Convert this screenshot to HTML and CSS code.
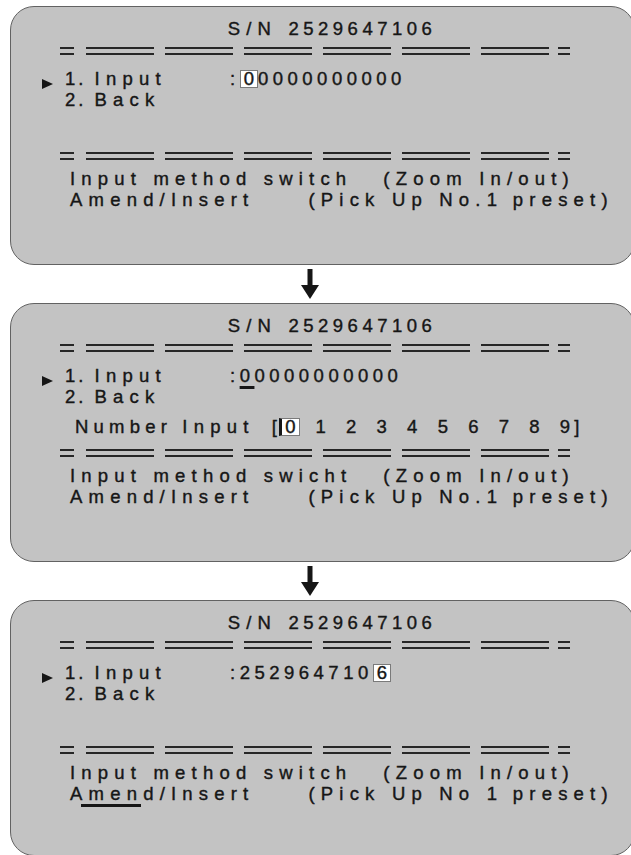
FILE: index.html
```html
<!DOCTYPE html>
<html lang="en">
<head>
    <meta charset="UTF-8">
    <meta name="viewport" content="width=device-width, initial-scale=1.0">
    <title>S/N input</title>
    <link rel="stylesheet" href="styles.css">
</head>
<body>
    <div class="flow">
        <!-- step 1: cursor box on first digit -->
        <section class="osd">
            <h2 class="title">S/N <span class="num">2529647106</span></h2>
            <div class="sep">
                <i class="bar short"></i><i class="bar"></i><i class="bar"></i><i class="bar"></i><i class="bar"></i><i class="bar"></i><i class="bar"></i><i class="bar short"></i>
            </div>
            <div class="menu">
                <svg class="marker" width="11" height="10" viewBox="0 0 11 10"><polygon points="0,0 11,5 0,10" fill="#161616"/></svg>
                <span class="label"><span class="idx">1. </span>Input</span>
                <span class="value num">:<span class="cur">0</span>0000000000</span>
            </div>
            <div class="menu">
                <span></span>
                <span class="label"><span class="idx">2. </span>Back</span>
                <span></span>
            </div>
            <div class="extra"></div>
            <div class="sep">
                <i class="bar short"></i><i class="bar"></i><i class="bar"></i><i class="bar"></i><i class="bar"></i><i class="bar"></i><i class="bar"></i><i class="bar short"></i>
            </div>
            <p class="help"><span class="key">Input method switch</span><span class="hint zoom">(Zoom In/out)</span></p>
            <p class="help"><span class="key">Amend/Insert</span><span class="hint pick">(Pick Up No.<span class="num">1</span> preset)</span></p>
        </section>

        <div class="arrow">
            <svg width="18" height="30" viewBox="0 0 18 30"><rect x="6.5" y="0" width="5" height="17" fill="#161616"/><polygon points="0,16 18,16 9,30" fill="#161616"/></svg>
        </div>

        <!-- step 2: number input list -->
        <section class="osd">
            <h2 class="title">S/N <span class="num">2529647106</span></h2>
            <div class="sep">
                <i class="bar short"></i><i class="bar"></i><i class="bar"></i><i class="bar"></i><i class="bar"></i><i class="bar"></i><i class="bar"></i><i class="bar short"></i>
            </div>
            <div class="menu">
                <svg class="marker" width="11" height="10" viewBox="0 0 11 10"><polygon points="0,0 11,5 0,10" fill="#161616"/></svg>
                <span class="label"><span class="idx">1. </span>Input</span>
                <span class="value num">:<span class="under">0</span>0000000000</span>
            </div>
            <div class="menu">
                <span></span>
                <span class="label"><span class="idx">2. </span>Back</span>
                <span></span>
            </div>
            <div class="extra">
                <p class="pick-list"><span class="word">Number </span>Input <span class="digits">[<span class="cur">0</span> 1 2 3 4 5 6 7 8 9]</span></p>
            </div>
            <div class="sep">
                <i class="bar short"></i><i class="bar"></i><i class="bar"></i><i class="bar"></i><i class="bar"></i><i class="bar"></i><i class="bar"></i><i class="bar short"></i>
            </div>
            <p class="help"><span class="key">Input method swicht</span><span class="hint zoom">(Zoom In/out)</span></p>
            <p class="help"><span class="key">Amend/Insert</span><span class="hint pick">(Pick Up No.<span class="num">1</span> preset)</span></p>
        </section>

        <div class="arrow">
            <svg width="18" height="30" viewBox="0 0 18 30"><rect x="6.5" y="0" width="5" height="17" fill="#161616"/><polygon points="0,16 18,16 9,30" fill="#161616"/></svg>
        </div>

        <!-- step 3: serial entered -->
        <section class="osd last">
            <h2 class="title">S/N <span class="num">2529647106</span></h2>
            <div class="sep">
                <i class="bar short"></i><i class="bar"></i><i class="bar"></i><i class="bar"></i><i class="bar"></i><i class="bar"></i><i class="bar"></i><i class="bar short"></i>
            </div>
            <div class="menu">
                <svg class="marker" width="11" height="10" viewBox="0 0 11 10"><polygon points="0,0 11,5 0,10" fill="#161616"/></svg>
                <span class="label"><span class="idx">1. </span>Input</span>
                <span class="value num">:252964710<span class="cur">6</span></span>
            </div>
            <div class="menu">
                <span></span>
                <span class="label"><span class="idx">2. </span>Back</span>
                <span></span>
            </div>
            <div class="extra"></div>
            <div class="sep">
                <i class="bar short"></i><i class="bar"></i><i class="bar"></i><i class="bar"></i><i class="bar"></i><i class="bar"></i><i class="bar"></i><i class="bar short"></i>
            </div>
            <p class="help"><span class="key">Input method switch</span><span class="hint zoom">(Zoom In/out)</span></p>
            <p class="help"><span class="key"><span class="mode">Amend</span>/Insert</span><span class="hint pick">(Pick Up No <span class="num">1</span> preset)</span></p>
        </section>
    </div>
</body>
</html>
```

FILE: styles.css
```css
body {
    margin: 0;
    padding: 0;
    background-color: #fff;
    color: #161616;
    font-family: "Liberation Sans", Arial, sans-serif;
    overflow: hidden;
}

.flow {
    padding: 6px 0 0 10px;
}

.osd {
    box-sizing: border-box;
    width: 625px;
    height: 259px;
    padding: 12px 0 0 31px;
    background-color: #c3c3c3;
    border: 1px solid #626262;
    border-radius: 24px;
    font-size: 18.5px;
    line-height: 20px;
    letter-spacing: 6.2px;
    -webkit-text-stroke: 0.4px #161616;
}

.osd.last {
    height: 256px;
}

.num {
    letter-spacing: 4.5px;
}

.idx {
    letter-spacing: 3px;
}

.title {
    margin: 0;
    padding-right: 12px;
    font-size: 18.5px;
    font-weight: normal;
    text-align: center;
}

.sep {
    display: flex;
    gap: 11px;
    margin: 8px 0 0 18px;
}

.bar {
    width: 68px;
    height: 4px;
    border-top: 2px solid #262626;
    border-bottom: 2px solid #262626;
}

.bar.short {
    width: 14px;
}

.sep .bar.short:first-child {
    margin-right: 1px;
}

.sep .bar.short:last-child {
    width: 12px;
    margin-left: -2px;
}

.sep + .menu {
    margin-top: 14px;
}

.menu {
    display: grid;
    grid-template-columns: 23px 165px auto;
    height: 20px;
}

.menu + .menu {
    margin-top: 1px;
}

.marker {
    margin-top: 10px;
}

.cur {
    display: inline-block;
    line-height: 16px;
    padding: 0 3px;
    letter-spacing: 0;
    background-color: #fff;
    border: 1px solid #7a7a7a;
}

.under {
    text-decoration: underline;
    text-decoration-thickness: 3px;
    text-underline-offset: 4px;
}

.extra {
    height: 20px;
    margin-top: 10px;
}

.pick-list {
    margin: 0 0 0 33px;
}

.word {
    letter-spacing: 5.2px;
}

.digits {
    margin-left: 6px;
    letter-spacing: 4.3px;
    word-spacing: 6.5px;
}

.digits .cur {
    border-left: 3px solid #161616;
    margin-left: -2px;
}

.extra + .sep {
    margin-top: 12px;
}

.sep + .help {
    margin-top: 9px;
}

.help {
    display: flex;
    margin: 0 0 0 28px;
    height: 20px;
    white-space: pre;
}

.help + .help {
    margin-top: 1px;
}

.hint.zoom {
    margin-left: 31px;
}

.hint.pick {
    margin-left: 54px;
}

.mode {
    padding-bottom: 3px;
    background: linear-gradient(#161616, #161616) 11px 100% / 60px 3px no-repeat;
}

.arrow {
    display: flex;
    align-items: center;
    height: 38px;
    padding-left: 291px;
}
```
